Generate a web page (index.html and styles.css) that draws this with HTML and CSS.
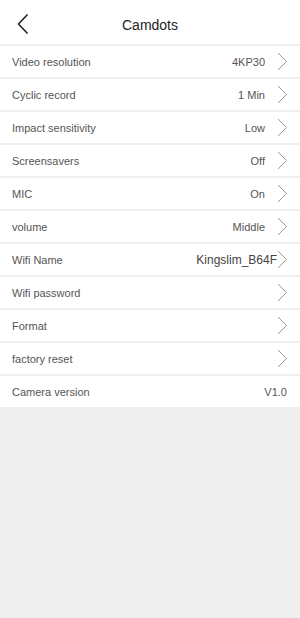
FILE: index.html
```html
<!DOCTYPE html>
<html>
<head>
<meta charset="utf-8">
<link rel="stylesheet" href="styles.css">
</head>
<body>
<div class="status"><span class="st-a"></span><span class="st-b"></span></div>
<header class="header">
  <svg class="back" width="14" height="22" viewBox="0 0 14 22"><path d="M11.5 1.5 L2.5 11 L11.5 20.5" fill="none" stroke="#1e1e1e" stroke-width="1.5"/></svg>
  <div class="title">Camdots</div>
</header>
<div class="list">
  <div class="row"><span class="label">Video resolution</span><span class="value">4KP30</span><span class="chev"><svg width="11" height="19" viewBox="0 0 11 19"><path d="M1 1 L9.5 9.5 L1 18" fill="none" stroke="#9a9a9a" stroke-width="1"/></svg></span></div>
  <div class="row"><span class="label">Cyclic record</span><span class="value">1 Min</span><span class="chev"><svg width="11" height="19" viewBox="0 0 11 19"><path d="M1 1 L9.5 9.5 L1 18" fill="none" stroke="#9a9a9a" stroke-width="1"/></svg></span></div>
  <div class="row"><span class="label">Impact sensitivity</span><span class="value">Low</span><span class="chev"><svg width="11" height="19" viewBox="0 0 11 19"><path d="M1 1 L9.5 9.5 L1 18" fill="none" stroke="#9a9a9a" stroke-width="1"/></svg></span></div>
  <div class="row"><span class="label">Screensavers</span><span class="value">Off</span><span class="chev"><svg width="11" height="19" viewBox="0 0 11 19"><path d="M1 1 L9.5 9.5 L1 18" fill="none" stroke="#9a9a9a" stroke-width="1"/></svg></span></div>
  <div class="row"><span class="label">MIC</span><span class="value">On</span><span class="chev"><svg width="11" height="19" viewBox="0 0 11 19"><path d="M1 1 L9.5 9.5 L1 18" fill="none" stroke="#9a9a9a" stroke-width="1"/></svg></span></div>
  <div class="row"><span class="label">volume</span><span class="value">Middle</span><span class="chev"><svg width="11" height="19" viewBox="0 0 11 19"><path d="M1 1 L9.5 9.5 L1 18" fill="none" stroke="#9a9a9a" stroke-width="1"/></svg></span></div>
  <div class="row"><span class="label">Wifi Name</span><span class="value big">Kingslim_B64F</span><span class="chev tight"><svg width="11" height="19" viewBox="0 0 11 19"><path d="M1 1 L9.5 9.5 L1 18" fill="none" stroke="#9a9a9a" stroke-width="1"/></svg></span></div>
  <div class="row"><span class="label">Wifi password</span><span class="value"></span><span class="chev"><svg width="11" height="19" viewBox="0 0 11 19"><path d="M1 1 L9.5 9.5 L1 18" fill="none" stroke="#9a9a9a" stroke-width="1"/></svg></span></div>
  <div class="row"><span class="label">Format</span><span class="value"></span><span class="chev"><svg width="11" height="19" viewBox="0 0 11 19"><path d="M1 1 L9.5 9.5 L1 18" fill="none" stroke="#9a9a9a" stroke-width="1"/></svg></span></div>
  <div class="row"><span class="label">factory reset</span><span class="value"></span><span class="chev"><svg width="11" height="19" viewBox="0 0 11 19"><path d="M1 1 L9.5 9.5 L1 18" fill="none" stroke="#9a9a9a" stroke-width="1"/></svg></span></div>
  <div class="row last"><span class="label">Camera version</span><span class="value">V1.0</span></div>
</div>
</body>
</html>
```
FILE: styles.css
```css
html, body {
  margin: 0;
  padding: 0;
  background: #efeff0;
  font-family: "Liberation Sans", Arial, sans-serif;
}
body {
  width: 300px;
  min-height: 618px;
  position: relative;
}
.status {
  position: absolute;
  top: 0;
  left: 0;
  right: 0;
  height: 2px;
}
.st-a {
  position: absolute;
  left: 222px;
  top: 0;
  width: 22px;
  height: 1px;
  background: #e4e4e4;
}
.st-b {
  position: absolute;
  left: 277px;
  top: 0;
  width: 5px;
  height: 2px;
  background: #bdbdbd;
}
.header {
  height: 44px;
  background: #fff;
  display: flex;
  align-items: center;
  justify-content: center;
  position: relative;
}
.back {
  position: absolute;
  left: 16px;
  top: 13px;
}
.title {
  font-size: 14px;
  color: #1e1e1e;
  margin-top: 5px;
}
.list {
  display: flex;
  flex-direction: column;
  gap: 2px;
  padding-top: 2px;
}
.row {
  height: 31px;
  background: #fff;
  display: flex;
  align-items: center;
  padding: 0 12px 0 12px;
  font-size: 11px;
  color: #555;
}
.label {
  flex: 1;
}
.value {
  color: #555;
}
.value.big {
  font-size: 12px;
  color: #444;
}
.chev {
  display: flex;
  align-items: center;
  margin-left: 12px;
  width: 11px;
}
.chev.tight {
  margin-left: 0;
}
.last .value {
  margin-right: 1px;
}
```
